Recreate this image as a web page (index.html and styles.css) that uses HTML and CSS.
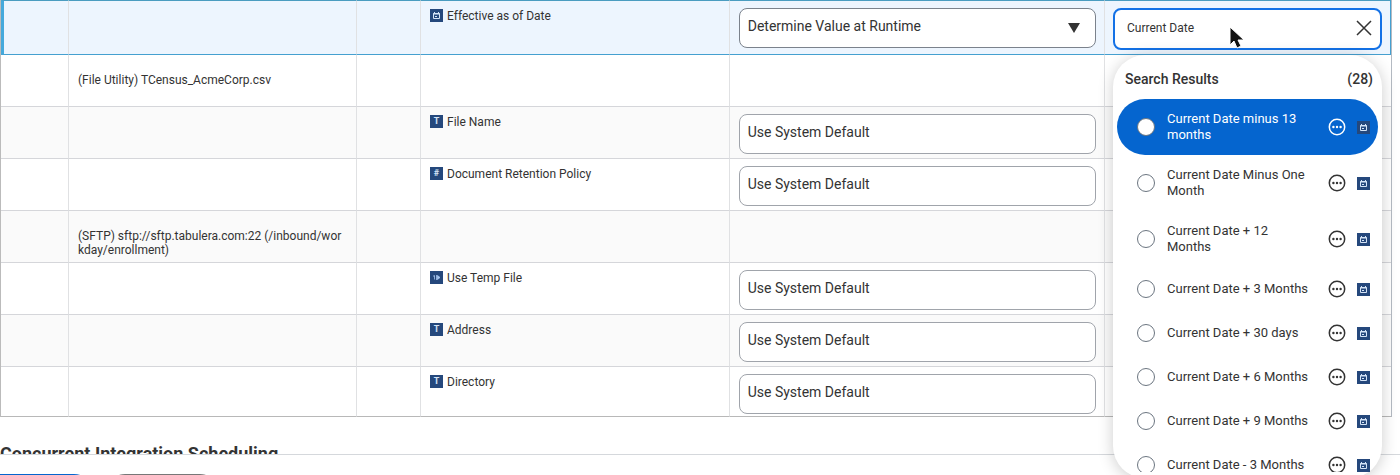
FILE: index.html
```html
<!DOCTYPE html>
<html lang="en">
<head>
  <meta charset="UTF-8" />
  <meta name="viewport" content="width=device-width, initial-scale=1.0"/>
  <title>Integration Criteria</title>
  <link rel="stylesheet" href="styles.css">
</head>
<body>
  <svg class="defs" width="0" height="0" aria-hidden="true">
    <symbol id="calendar" viewBox="0 0 13 13">
      <rect width="13" height="13" fill="#25487c"/>
      <path d="M4.5 3v1.5M8.5 3v1.5" stroke="#d5e4f7" stroke-width="1"/>
      <path d="M3.5 4.5h6v5h-6z" fill="none" stroke="#d5e4f7" stroke-width="1"/>
      <path d="M3 5h7M5 7.5h2" stroke="#d5e4f7" stroke-width="1"/>
    </symbol>
    <symbol id="more" viewBox="0 0 18 18">
      <circle cx="9" cy="9" r="7.7" fill="none" stroke="currentColor" stroke-width="1.5"/>
      <circle cx="5.4" cy="9" r="1.2" fill="currentColor"/>
      <circle cx="9" cy="9" r="1.2" fill="currentColor"/>
      <circle cx="12.6" cy="9" r="1.2" fill="currentColor"/>
    </symbol>
  </svg>

  <main class="content">
    <table class="grid">
      <colgroup>
        <col class="col-edge">
        <col class="col-service">
        <col class="col-flag">
        <col class="col-field">
        <col class="col-type">
        <col class="col-value">
      </colgroup>
      <tbody>
        <tr class="active">
          <td></td>
          <td></td>
          <td></td>
          <td>
            <div class="field"><svg class="type"><use href="#calendar"/></svg><label for="effective">Effective as of Date</label></div>
          </td>
          <td>
            <div class="select-wrap">
              <select id="effective"><option>Determine Value at Runtime</option></select>
              <svg class="caret" viewBox="0 0 12 10"><path d="M0 0h12L6 10z" fill="#333"/></svg>
            </div>
          </td>
          <td>
            <div class="search">
              <input type="text" value="Current Date" aria-label="Search value">
              <button class="clear" type="button" aria-label="Clear">
                <svg width="16" height="16" viewBox="0 0 16 16"><path d="M1 1l14 14M15 1L1 15" stroke="#333" stroke-width="1.5" fill="none"/></svg>
              </button>
              <svg class="pointer" width="16" height="24" viewBox="0 0 16 24"><path d="M1 1v18l4-4 3 7 4-2-3-6h6z" fill="#111" stroke="#fff" stroke-width="1"/></svg>
              <div class="results">
                <div class="results-head"><span>Search Results</span><span>(28)</span></div>
                <ul>
                  <li class="selected">
                    <input type="radio" name="value" id="v1"><label for="v1">Current Date minus 13 months</label>
                    <button type="button" aria-label="More"><svg><use href="#more"/></svg></button><svg class="type"><use href="#calendar"/></svg>
                  </li>
                  <li>
                    <input type="radio" name="value" id="v2"><label for="v2">Current Date Minus One Month</label>
                    <button type="button" aria-label="More"><svg><use href="#more"/></svg></button><svg class="type"><use href="#calendar"/></svg>
                  </li>
                  <li>
                    <input type="radio" name="value" id="v3"><label for="v3">Current Date + 12 Months</label>
                    <button type="button" aria-label="More"><svg><use href="#more"/></svg></button><svg class="type"><use href="#calendar"/></svg>
                  </li>
                  <li>
                    <input type="radio" name="value" id="v4"><label for="v4">Current Date + 3 Months</label>
                    <button type="button" aria-label="More"><svg><use href="#more"/></svg></button><svg class="type"><use href="#calendar"/></svg>
                  </li>
                  <li>
                    <input type="radio" name="value" id="v5"><label for="v5">Current Date + 30 days</label>
                    <button type="button" aria-label="More"><svg><use href="#more"/></svg></button><svg class="type"><use href="#calendar"/></svg>
                  </li>
                  <li>
                    <input type="radio" name="value" id="v6"><label for="v6">Current Date + 6 Months</label>
                    <button type="button" aria-label="More"><svg><use href="#more"/></svg></button><svg class="type"><use href="#calendar"/></svg>
                  </li>
                  <li>
                    <input type="radio" name="value" id="v7"><label for="v7">Current Date + 9 Months</label>
                    <button type="button" aria-label="More"><svg><use href="#more"/></svg></button><svg class="type"><use href="#calendar"/></svg>
                  </li>
                  <li>
                    <input type="radio" name="value" id="v8"><label for="v8">Current Date - 3 Months</label>
                    <button type="button" aria-label="More"><svg><use href="#more"/></svg></button><svg class="type"><use href="#calendar"/></svg>
                  </li>
                </ul>
              </div>
            </div>
          </td>
        </tr>
        <tr>
          <td></td>
          <td class="service">(File Utility) TCensus_AcmeCorp.csv</td>
          <td></td>
          <td></td>
          <td></td>
          <td></td>
        </tr>
        <tr>
          <td></td>
          <td></td>
          <td></td>
          <td><div class="field"><span class="type">T</span><label for="filename">File Name</label></div></td>
          <td><select id="filename"><option>Use System Default</option></select></td>
          <td></td>
        </tr>
        <tr>
          <td></td>
          <td></td>
          <td></td>
          <td><div class="field"><span class="type">#</span><label for="retention">Document Retention Policy</label></div></td>
          <td><select id="retention"><option>Use System Default</option></select></td>
          <td></td>
        </tr>
        <tr>
          <td></td>
          <td class="service">(SFTP) sftp://sftp.tabulera.com:22 (/inbound/workday/enrollment)</td>
          <td></td>
          <td></td>
          <td></td>
          <td></td>
        </tr>
        <tr>
          <td></td>
          <td></td>
          <td></td>
          <td>
            <div class="field">
              <svg class="type" viewBox="0 0 13 13"><rect width="13" height="13" fill="#25487c"/><path d="M3 5h2M4.5 4.5v4M6.5 4v5M7.5 4.5v4L10 6.5z" stroke="#a9c8f0" stroke-width="0.8" fill="#a9c8f0"/></svg>
              <label for="tempfile">Use Temp File</label>
            </div>
          </td>
          <td><select id="tempfile"><option>Use System Default</option></select></td>
          <td></td>
        </tr>
        <tr>
          <td></td>
          <td></td>
          <td></td>
          <td><div class="field"><span class="type">T</span><label for="address">Address</label></div></td>
          <td><select id="address"><option>Use System Default</option></select></td>
          <td></td>
        </tr>
        <tr>
          <td></td>
          <td></td>
          <td></td>
          <td><div class="field"><span class="type">T</span><label for="directory">Directory</label></div></td>
          <td><select id="directory"><option>Use System Default</option></select></td>
          <td></td>
        </tr>
      </tbody>
    </table>
    <h2>Concurrent Integration Scheduling</h2>
  </main>

  <footer class="actions">
    <button class="ok" type="button" aria-label="OK"></button>
    <button class="cancel" type="button" aria-label="Cancel"></button>
  </footer>
</body>
</html>
```
FILE: styles.css
```css
* {
  box-sizing: border-box;
}
body {
  margin: 0;
  height: 100vh;
  display: flex;
  flex-direction: column;
  overflow: hidden;
  background: #fff;
  color: #333;
  font-family: Roboto, sans-serif;
  font-size: 12px;
}
.defs {
  position: absolute;
}
.content {
  flex: 1;
  min-height: 0;
  padding-right: 8px;
}
button {
  padding: 0;
  border: none;
  background: none;
  font-family: inherit;
}

/* criteria table */
.grid {
  width: 100%;
  table-layout: fixed;
  border-collapse: separate;
  border-spacing: 0;
  border-left: 1px solid #bbb;
  border-right: 1px solid #b4bac2;
}
.col-edge {
  width: 68px;
}
.col-service {
  width: 288px;
}
.col-flag {
  width: 64px;
}
.col-type {
  width: 27%;
}
.col-value {
  width: 286px;
}
.grid td {
  height: 52px;
  padding: 7px 8px 4px 9px;
  vertical-align: top;
  border-right: 1px solid #e0e1e3;
  border-bottom: 1px solid #d5d6da;
}
.grid td:last-child {
  padding-left: 8px;
  border-right: none;
}
.grid tr:nth-child(odd) td {
  background: #fafafa;
}
.grid tr:last-child td {
  height: 50px;
  padding-bottom: 2px;
  border-bottom-color: #b8b8b8;
}
.grid tr.active td {
  height: 55px;
  background: #edf5fe;
  border-top: 1px solid #4a9cc0;
  border-bottom-color: #45a0d0;
}
.grid .active td:first-child {
  border-left: 3px solid #45a9dc;
}
.grid .active td:last-child {
  border-right: 1px solid #45a0d0;
}
.grid .service {
  padding-top: 18px;
  padding-right: 14px;
  line-height: 14px;
  word-break: break-all;
}
.field {
  display: flex;
  gap: 4px;
  line-height: 16px;
}
.type {
  display: block;
  flex: none;
  width: 13px;
  height: 13px;
}
span.type {
  background: #25487c;
  color: #d5e4f7;
  font-size: 9px;
  font-weight: 700;
  line-height: 13px;
  text-align: center;
}
.field .type {
  margin-top: 1px;
}

select {
  display: block;
  width: 100%;
  height: 40px;
  padding: 0 8px 4px;
  appearance: none;
  border: 1px solid #a0a4ab;
  border-radius: 8px;
  background: #fff;
  color: #333;
  font-family: inherit;
  font-size: 14px;
}
.active select {
  border-color: #7b828c;
}
.select-wrap {
  position: relative;
}
.caret {
  position: absolute;
  top: 15px;
  right: 16px;
  width: 12px;
  height: 10px;
}

/* search prompt */
.search {
  position: relative;
  display: flex;
  align-items: center;
  height: 42px;
  padding: 0 8px 2px 12px;
  border: 2px solid #1371e6;
  border-radius: 8px;
  background: #fff;
}
.search > input {
  flex: 1;
  min-width: 0;
  padding: 0;
  border: none;
  outline: none;
  color: #333;
  font-family: inherit;
  font-size: 12px;
}
.clear svg {
  display: block;
}
.pointer {
  position: absolute;
  left: 114px;
  top: 16px;
}
.results {
  position: absolute;
  z-index: 2;
  top: 45px;
  left: -2px;
  right: -2px;
  height: calc(100vh - 52px);
  padding: 0 4px 6px;
  display: flex;
  flex-direction: column;
  border-radius: 32px;
  background: #fff;
  box-shadow: 0 2px 16px rgba(0, 0, 0, 0.2);
}
.results-head {
  display: flex;
  justify-content: space-between;
  padding: 16px 5px 12px 8px;
  font-size: 14px;
  font-weight: 500;
  line-height: 16px;
}
.results ul {
  flex: 1;
  min-height: 0;
  margin: 0;
  padding: 0;
  overflow: hidden;
  list-style: none;
}
.results li {
  display: flex;
  align-items: center;
  min-height: 44px;
  padding: 12px 8px 12px 20px;
  border-radius: 28px;
  font-size: 13px;
  line-height: 16px;
}
.results li label {
  flex: 1;
  padding-right: 18px;
}
.results li input {
  flex: none;
  width: 18px;
  height: 18px;
  margin: 0 12px 0 0;
  appearance: none;
  border: 1px solid #6b7580;
  border-radius: 50%;
  background: #fff;
}
.results li button {
  margin-right: 11px;
  color: #333;
}
.results li button svg {
  display: block;
  width: 18px;
  height: 18px;
}
.results .selected,
.results .selected button {
  color: #fff;
}
.results .selected {
  background: #0565cf;
}

h2 {
  margin: 25px 0 0;
  font-size: 18px;
  font-weight: 700;
  line-height: 24px;
}

/* bottom action bar */
.actions {
  position: relative;
  z-index: 1;
  display: flex;
  gap: 11px;
  height: 21px;
  padding-top: 19px;
  border-top: 1px solid #d5d8dc;
  background: #fff;
  overflow: hidden;
}
.actions button {
  flex: none;
  height: 40px;
  border-radius: 20px;
}
.actions .ok {
  width: 94px;
  border-radius: 0 20px 20px 0;
  background: #0565cf;
}
.actions .cancel {
  width: 115px;
  border: 1px solid #777;
}
```
